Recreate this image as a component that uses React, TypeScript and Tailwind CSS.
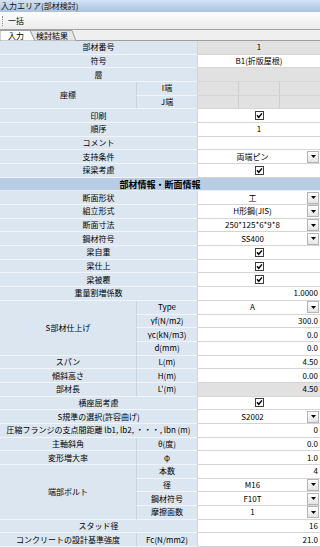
import React from 'react'

type Val =
  | { kind: 'text'; text: string; align?: 'center' | 'right'; gray?: boolean }
  | { kind: 'check' }
  | { kind: 'select'; text: string }
  | { kind: 'xyz' }
  | { kind: 'empty'; gray?: boolean }

type Row =
  | { header: string }
  | { label: string; sub?: string[]; vals: Val[] }

const check: Val = { kind: 'check' }
const num = (text: string): Val => ({ kind: 'text', text, align: 'right' })

const rows: Row[] = [
  { label: '部材番号', vals: [{ kind: 'text', text: '1', gray: true }] },
  { label: '符号', vals: [{ kind: 'text', text: 'B1(折版屋根)' }] },
  { label: '層', vals: [{ kind: 'empty', gray: true }] },
  { label: '座標', sub: ['I端', 'J端'], vals: [{ kind: 'xyz' }, { kind: 'xyz' }] },
  { label: '印刷', vals: [check] },
  { label: '順序', vals: [{ kind: 'text', text: '1' }] },
  { label: 'コメント', vals: [{ kind: 'empty' }] },
  { label: '支持条件', vals: [{ kind: 'select', text: '両端ピン' }] },
  { label: '採梁考慮', vals: [check] },
  { header: '部材情報・断面情報' },
  { label: '断面形状', vals: [{ kind: 'select', text: '工' }] },
  { label: '組立形式', vals: [{ kind: 'select', text: 'H形鋼(JIS)' }] },
  { label: '断面寸法', vals: [{ kind: 'select', text: '250*125*6*9*8' }] },
  { label: '鋼材符号', vals: [{ kind: 'select', text: 'SS400' }] },
  { label: '梁自重', vals: [check] },
  { label: '梁仕上', vals: [check] },
  { label: '梁被覆', vals: [check] },
  { label: '重量割増係数', vals: [num('1.0000')] },
  {
    label: 'S部材仕上げ',
    sub: ['Type', 'γf(N/m2)', 'γc(kN/m3)', 'd(mm)'],
    vals: [{ kind: 'select', text: 'A' }, num('300.0'), num('0.0'), num('0.0')],
  },
  { label: 'スパン', sub: ['L(m)'], vals: [num('4.50')] },
  { label: '傾斜高さ', sub: ['H(m)'], vals: [num('0.00')] },
  { label: '部材長', sub: ["L'(m)"], vals: [{ kind: 'text', text: '4.50', align: 'right', gray: true }] },
  { label: '横座屈考慮', vals: [check] },
  { label: 'S規準の選択(許容曲げ)', vals: [{ kind: 'select', text: 'S2002' }] },
  { label: '圧縮フランジの支点間距離 lb1, lb2, ・・・, lbn (m)', vals: [num('0')] },
  { label: '主軸斜角', sub: ['θ(度)'], vals: [num('0.0')] },
  { label: '変形増大率', sub: ['φ'], vals: [num('1.0')] },
  {
    label: '端部ボルト',
    sub: ['本数', '径', '鋼材符号', '摩擦面数'],
    vals: [num('4'), { kind: 'select', text: 'M16' }, { kind: 'select', text: 'F10T' }, { kind: 'select', text: '1' }],
  },
  { label: 'スタッド径', vals: [num('16')] },
  { label: 'コンクリートの設計基準強度', sub: ['Fc(N/mm2)'], vals: [num('21.0')] },
]

const spans: Record<number, string> = { 1: 'row-span-1', 2: 'row-span-2', 4: 'row-span-4' }

const labelCls = 'min-h-0 flex items-center justify-center bg-[#dce6f1] border-b border-[#f1f5fa] text-[8px] leading-none whitespace-nowrap'
const valueCls = 'min-h-0 flex items-center border-b border-l border-[#d5d5d5] text-[8px] leading-none whitespace-nowrap'

function CheckBox() {
  return (
    <svg width="9" height="9" viewBox="0 0 9 9">
      <rect x="0.5" y="0.5" width="8" height="8" fill="#fff" stroke="#3c3c3c" />
      <path d="M2 4.3 L3.7 6.3 L7 2.4" fill="none" stroke="#000" strokeWidth="1.4" />
    </svg>
  )
}

function DropButton() {
  return (
    <div className="mr-px flex h-[12px] w-[12px] shrink-0 items-center justify-center border border-[#b4b4b4] bg-linear-to-b from-[#ffffff] to-[#e4e4e4]">
      <svg width="5" height="3" viewBox="0 0 5 3">
        <path d="M0 0 H5 L2.5 3 Z" fill="#000" />
      </svg>
    </div>
  )
}

function Value({ v }: { v: Val }) {
  if (v.kind === 'check')
    return (
      <div className={`${valueCls} justify-center bg-white`}>
        <CheckBox />
      </div>
    )
  if (v.kind === 'select')
    return (
      <div className={`${valueCls} bg-white`}>
        <span className="flex-1 text-center">{v.text}</span>
        <DropButton />
      </div>
    )
  if (v.kind === 'xyz')
    return (
      <div className={`${valueCls} bg-[#e1e1e1]`}>
        <div className="h-full flex-1" />
        <div className="h-full flex-1 border-l border-[#cdcdcd]" />
        <div className="h-full flex-1 border-l border-[#cdcdcd]" />
      </div>
    )
  if (v.kind === 'empty') return <div className={`${valueCls} ${v.gray ? 'bg-[#e1e1e1]' : 'bg-white'}`} />
  return (
    <div
      className={`${valueCls} ${v.gray ? 'bg-[#e1e1e1]' : 'bg-white'} ${
        v.align === 'right' ? 'justify-end pr-[2px]' : 'justify-center'
      }`}
    >
      {v.text}
    </div>
  )
}

function Tabs() {
  return (
    <div className="relative h-[11px] shrink-0 bg-[#efefef]">
      <svg className="absolute inset-0" width="320" height="11" viewBox="0 0 320 11">
        <polygon points="30,0.5 72,0.5 76,11 35,11" fill="#e6e6e6" stroke="#9d9d9d" />
        <polygon points="0,0.5 30,0.5 35,11 0,11" fill="#fff" stroke="#9d9d9d" />
        <line x1="76" y1="10.5" x2="320" y2="10.5" stroke="#9d9d9d" />
      </svg>
      <div className="relative flex h-full items-center text-[8px] leading-none">
        <span className="ml-[8px]">入力</span>
        <span className="ml-[12px]">検討結果</span>
      </div>
    </div>
  )
}

export default function App() {
  return (
    <div className="flex h-[547px] w-[320px] flex-col overflow-hidden bg-white font-['Noto_Sans_CJK_JP',sans-serif] text-black">
      <div className="h-[12px] shrink-0 bg-linear-to-b from-[#d4e3f5] to-[#a8c2e1] pl-px text-[8px] leading-[12px] text-[#111]">
        入力エリア(部材検討)
      </div>
      <div className="flex h-[18px] shrink-0 items-center border-b border-[#a3a3a3] bg-linear-to-b from-[#fcfcfc] to-[#ececec]">
        <div className="ml-[2px] h-[10px] border-l border-dotted border-[#8a8a8a]" />
        <span className="ml-[5px] text-[8px] leading-none">一括</span>
      </div>
      <Tabs />
      <div className="grid h-[506px] grid-cols-[136px_61px_1fr] grid-rows-[repeat(37,minmax(0,1fr))]">
        {rows.map((r, i) => {
          if ('header' in r)
            return (
              <div
                key={i}
                className="col-span-3 flex min-h-0 items-center justify-center border-b border-[#e6edf6] bg-[#b8cce4] text-[9px] font-bold leading-none"
              >
                {r.header}
              </div>
            )
          if (!r.sub)
            return (
              <React.Fragment key={i}>
                <div className={`${labelCls} col-span-2`}>{r.label}</div>
                <Value v={r.vals[0]} />
              </React.Fragment>
            )
          return (
            <React.Fragment key={i}>
              <div className={`${labelCls} ${spans[r.sub.length]}`}>{r.label}</div>
              {r.sub.map((s, j) => (
                <React.Fragment key={j}>
                  <div className={`${labelCls} border-l border-l-[#c6d3e3]`}>{s}</div>
                  <Value v={r.vals[j]} />
                </React.Fragment>
              ))}
            </React.Fragment>
          )
        })}
      </div>
    </div>
  )
}
